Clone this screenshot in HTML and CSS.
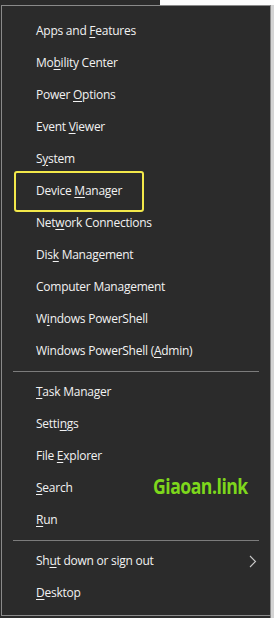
FILE: index.html
```html
<!DOCTYPE html>
<html lang="en">
<head>
    <meta charset="UTF-8">
    <meta name="viewport" content="width=device-width, initial-scale=1.0">
    <title>Quick Link Menu</title>
    <link rel="stylesheet" href="styles.css">
</head>
<body>
    <div class="quick-menu">
        <ul class="menu-group">
            <li class="menu-item">Apps and <u>F</u>eatures</li>
            <li class="menu-item">Mo<u>b</u>ility Center</li>
            <li class="menu-item">Power <u>O</u>ptions</li>
            <li class="menu-item">Event <u>V</u>iewer</li>
            <li class="menu-item">S<u>y</u>stem</li>
            <li class="menu-item marked">Device <u>M</u>anager</li>
            <li class="menu-item">Net<u>w</u>ork Connections</li>
            <li class="menu-item">Dis<u>k</u> Management</li>
            <li class="menu-item">Computer Mana<u>g</u>ement</li>
            <li class="menu-item">W<u>i</u>ndows PowerShell</li>
            <li class="menu-item">Windows PowerShell (<u>A</u>dmin)</li>
        </ul>

        <div class="menu-separator"></div>

        <ul class="menu-group">
            <li class="menu-item"><u>T</u>ask Manager</li>
            <li class="menu-item">Setti<u>n</u>gs</li>
            <li class="menu-item">File <u>E</u>xplorer</li>
            <li class="menu-item"><u>S</u>earch</li>
            <li class="menu-item"><u>R</u>un</li>
        </ul>

        <div class="menu-separator"></div>

        <ul class="menu-group">
            <li class="menu-item has-sub">
                <span>Sh<u>u</u>t down or sign out</span>
                <svg class="sub-arrow" width="8" height="13" viewBox="0 0 8 13">
                    <path d="M1 1 L6.5 6.5 L1 12" fill="none" stroke="#c8c8c8" stroke-width="1.1"/>
                </svg>
            </li>
            <li class="menu-item"><u>D</u>esktop</li>
        </ul>

        <span class="watermark">Giaoan.link</span>
    </div>
</body>
</html>
```

FILE: styles.css
```css
* {
    margin: 0;
    padding: 0;
    box-sizing: border-box;
}

html, body {
    height: 100%;
}

body {
    font-family: 'Segoe UI', 'Open Sans', Arial, sans-serif;
    background:
        linear-gradient(to right, #2b2b2b 160px, #fdfdfd 160px) top left / 100% 5px no-repeat,
        linear-gradient(to right, #2b2b2b 270px, #d4d4d4 271px) top left / 100% 100% no-repeat;
    overflow: hidden;
}

.quick-menu {
    position: relative;
    margin: 5px 0 0 1px;
    width: 270px;
    height: 611px;
    background: #2b2b2b;
    border: 1px solid #8a8a8a;
    padding: 9px 0 0 0;
}

.menu-group {
    list-style: none;
}

.menu-item {
    position: relative;
    display: block;
    height: 32px;
    line-height: 32px;
    padding-left: 34px;
    color: #f2f2f2;
    font-size: 12px;
    letter-spacing: -0.25px;
    white-space: nowrap;
}

.menu-item u {
    text-underline-offset: 2px;
}

.menu-item.marked::after {
    content: "";
    position: absolute;
    left: 12px;
    top: -4px;
    width: 126px;
    height: 37px;
    border: 2px solid #f2e84a;
    border-radius: 3px;
}

.has-sub {
    display: flex;
    align-items: center;
    justify-content: space-between;
    padding-right: 13px;
}

.sub-arrow {
    display: block;
}

.menu-separator {
    height: 1px;
    margin: 4px 11px 4px 11px;
    background: #7c7c7c;
}

.watermark {
    position: absolute;
    left: 151px;
    top: 464px;
    color: #7ed71c;
    font-family: 'Open Sans', Arial, sans-serif;
    font-weight: 700;
    font-size: 22px;
    letter-spacing: -0.6px;
    transform: scaleX(0.8);
    transform-origin: left center;
}
```
